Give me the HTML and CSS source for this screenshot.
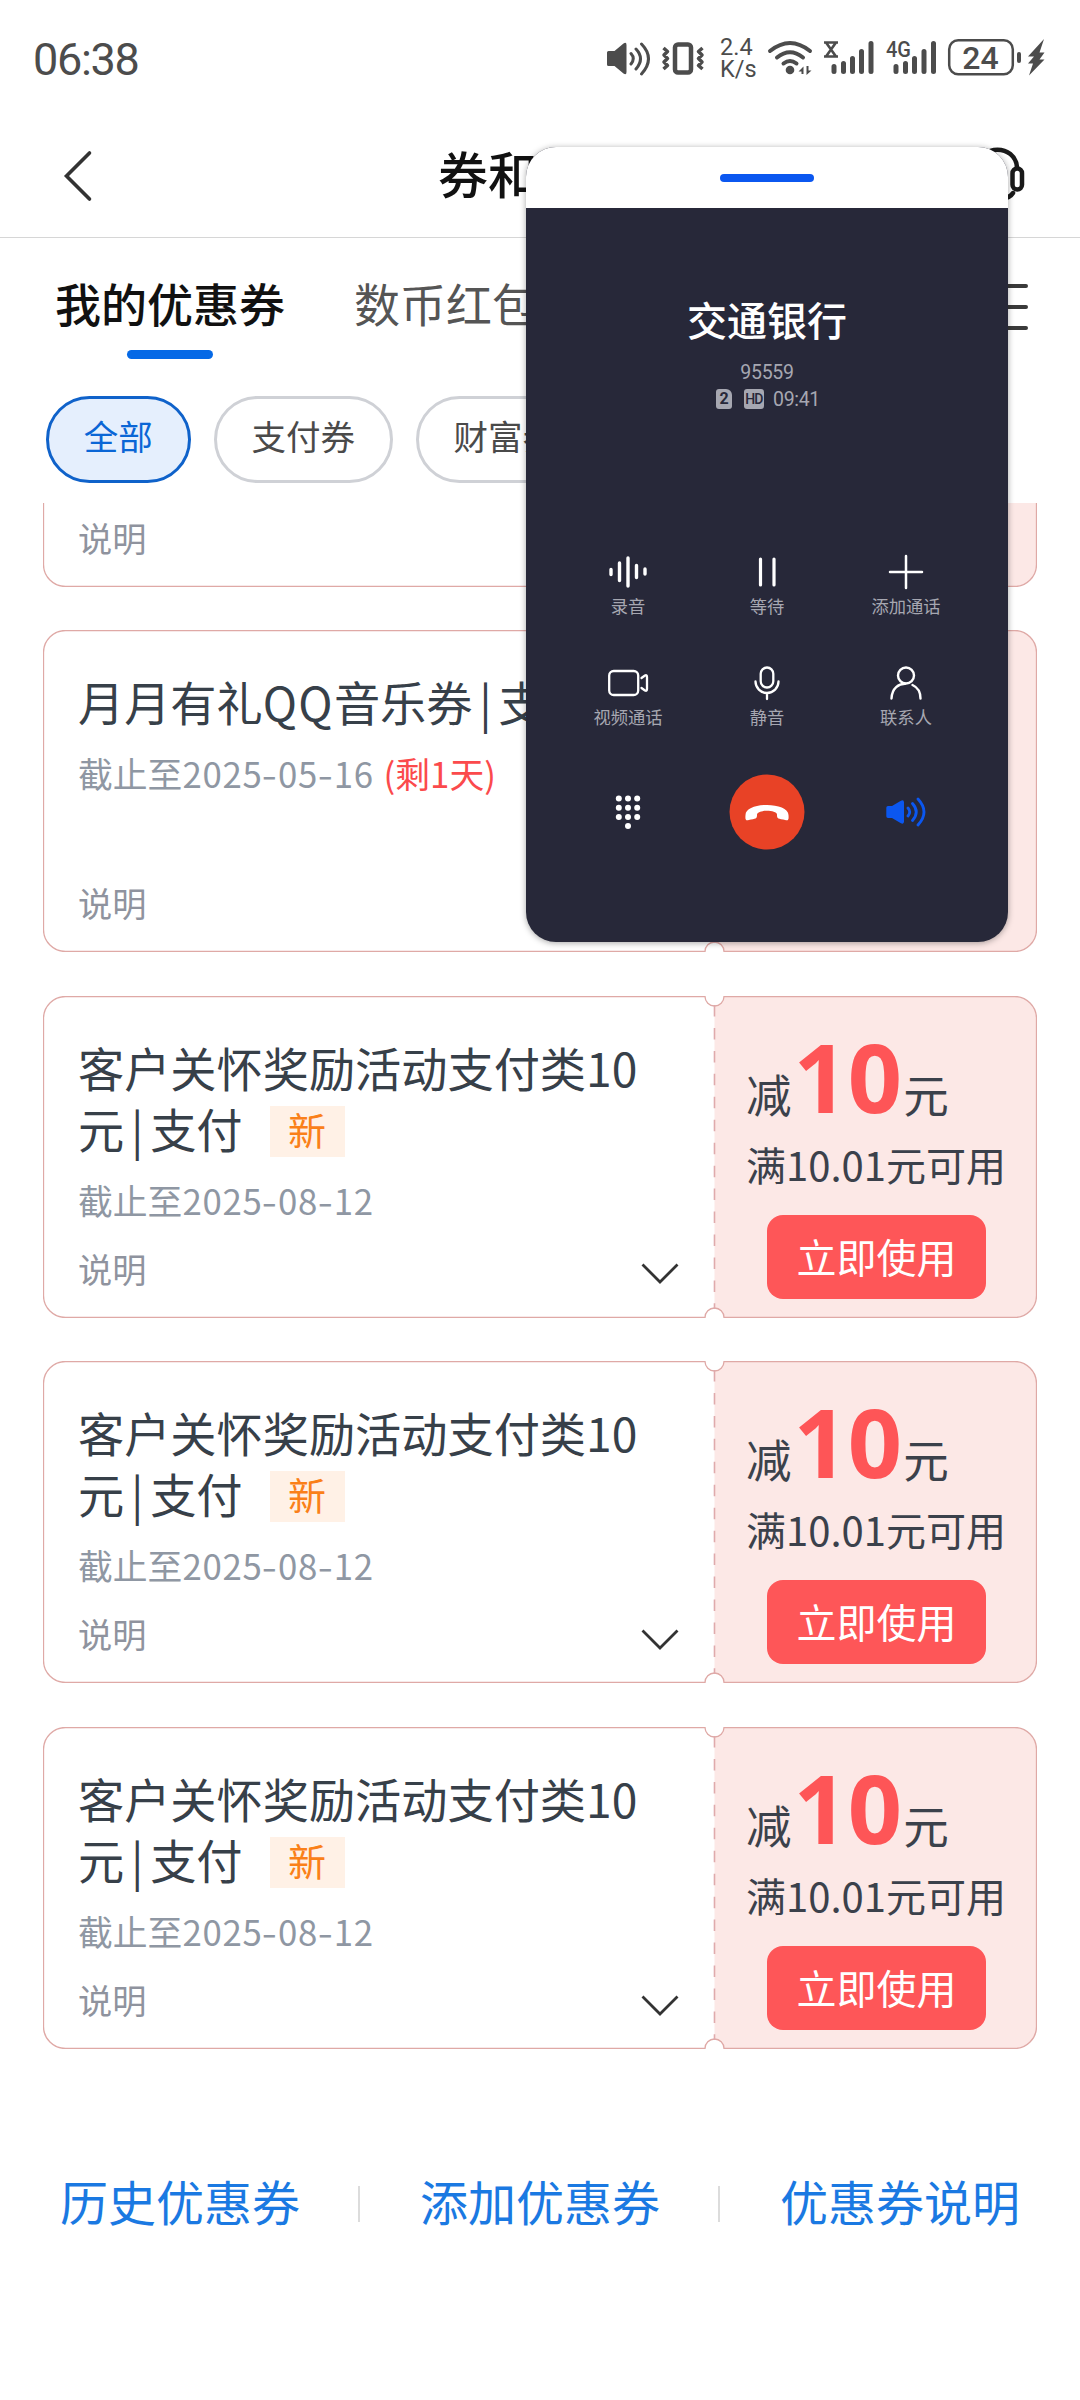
FILE: index.html
```html
<!DOCTYPE html>
<html lang="zh-CN">
<head>
<meta charset="utf-8">
<title>券和红包</title>
<link rel="stylesheet" href="styles.css">
</head>
<body>
<svg class="defs" width="0" height="0">
  <symbol id="ticket" viewBox="0 0 994 322">
    <path d="M671.5 .5H971.5A22 22 0 0 1 993.500 22.500V299.500A22 22 0 0 1 971.500 321.500H681A9.500 9.500 0 0 0 671.500 312.500V9.500A9.500 9.500 0 0 0 681 .5Z" fill="#fce8e6"/>
    <path d="M22.500 .5H662A9.500 9.500 0 0 0 681 .5H971.500A22 22 0 0 1 993.500 22.500V299.500A22 22 0 0 1 971.500 321.500H681A9.500 9.500 0 0 0 662 321.500H22.500A22 22 0 0 1 .5 299.500V22.500A22 22 0 0 1 22.500 .5Z" fill="none" stroke="#dfa9a6" stroke-width="1.300"/>
    <path d="M671.500 9V313" stroke="#dfaaac" stroke-width="1.600" stroke-dasharray="11.500 11.450"/>
  </symbol>
  <symbol id="chevron" viewBox="0 0 40 24"><path d="M2.500 2.500L20 20L37.500 2.500" fill="none" stroke="#333" stroke-width="2.800"/></symbol>
</svg>
<div class="screen">
  <header class="status">
    <span class="clock">06:38</span>
    <div class="indicators">
      <svg width="56" height="56" viewBox="600 30 56 56" fill="none" stroke="#4c4c4c" stroke-width="3" stroke-linecap="round"><path d="M608.500 51h6l9-7.500q3-2 3 1.500v27q0 3.500-3 1.500l-9-7.500h-6q-1.500 0-1.500-1.500v-12q0-1.500 1.500-1.500z" fill="#4c4c4c" stroke="none"/><path d="M631 53.500q4.500 5 0 10.500M636 49q9 9.500 0 20M641.500 44q14 14.500 0 30"/></svg>
      <svg width="56" height="56" viewBox="656 30 56 56" fill="none" stroke="#4c4c4c" stroke-width="4.500" stroke-linejoin="round"><rect x="675" y="44.500" width="16" height="28" rx="3"/><path d="M663.500 48l4 3.500-3.500 3.500 3.500 3.500-3.500 3.500 3.500 3.500-4 3.500M702.500 48l-4 3.500 3.500 3.500-3.500 3.500 3.500 3.500-3.500 3.500 4 3.500" stroke-width="3.500"/></svg>
      <span class="rate"><span>2.4</span><span>K/s</span></span>
      <svg width="56" height="56" viewBox="762 30 56 56" fill="none" stroke="#4c4c4c" stroke-width="4" stroke-linecap="round"><path d="M770 51q20-16 40 0M777 57.500q13-10.500 26 0M783.500 63.500q6.500-5 13 0"/><circle cx="790" cy="70" r="4.300" fill="#4c4c4c" stroke="none"/><path d="M798.500 71.500l5-5v7.500h-2v-2.500zM811.500 70.500l-5 4.500v-9h2v4.500z" fill="#4c4c4c" stroke="none"/></svg>
      <svg width="62" height="56" viewBox="818 30 62 56" fill="none" stroke="#4c4c4c" stroke-width="5" stroke-linecap="round"><path d="M824 42.500h14M824 56.500h14M826 42.500l10 14M836 42.500l-10 14" stroke-width="2.600" stroke-linecap="butt"/><path d="M834 66.500v5M843.500 63.500v8M852.500 58.500v13M861.500 51.500v20M871 43.500v28"/></svg>
      <svg width="62" height="56" viewBox="880 30 62 56" fill="none" stroke="#4c4c4c" stroke-width="5" stroke-linecap="round"><text x="886" y="57" class="net" textLength="25" lengthAdjust="spacingAndGlyphs">4G</text><path d="M896 66.500v5M905.500 63.500v8M914.500 68v3.500M914.500 58.500v13M924 51.500v20M933.500 43.500v28"/></svg>
      <svg width="108" height="56" viewBox="942 30 108 56"><rect x="949.200" y="40.200" width="63.600" height="34" rx="9" fill="none" stroke="#4c4c4c" stroke-width="2.500"/><text x="980.500" y="69" class="level" text-anchor="middle">24</text><rect x="1017" y="52" width="4" height="11" rx="2" fill="#4c4c4c"/><path d="M1044 39l-16 17.500h6l-6 7h5l-4 12 15.500-16h-5l5-7h-5z" fill="#4c4c4c"/></svg>
    </div>
  </header>

  <nav class="navbar">
    <svg class="back" width="32" height="56" viewBox="0 0 32 56"><path d="M27.500 5L4.500 28L27.500 51" fill="none" stroke="#333" stroke-width="3.600" stroke-linecap="round"/></svg>
    <h1 class="title">券和红包</h1>
    <svg class="service" width="56" height="56" viewBox="970 146 56 56" fill="none" stroke="#1a1a1a" stroke-width="4.500" stroke-linecap="round"><path d="M978 166C980 143 1015 143 1017 166M1013 192q-3 5-12 6"/><rect x="1012.500" y="167.500" width="9.500" height="21" rx="4.750"/><rect x="973" y="167.500" width="9.500" height="21" rx="4.750"/></svg>
  </nav>

  <div class="tabs">
    <span class="tab active">我的优惠券</span>
    <span class="tab">数币红包</span>
    <svg class="menu" width="44" height="50" viewBox="0 0 44 50"><path d="M4 4H40M4 25H40M4 46H40" stroke="#3a3a3a" stroke-width="4" stroke-linecap="round"/></svg>
  </div>

  <div class="chips">
    <span class="chip active">全部</span>
    <span class="chip">支付券</span>
    <span class="chip">财富券</span>
  </div>

  <main class="list">
    <article class="coupon">
      <svg class="shape"><use href="#ticket"/></svg>
      <section class="info"><div class="foot"><span>说明</span></div></section>
    </article>
    <article class="coupon">
      <svg class="shape"><use href="#ticket"/></svg>
      <section class="info">
        <h2>月月有礼<span class="latin">QQ</span>音乐券<span class="bar">|</span>支付</h2>
        <p class="date">截止至<span class="num">2025<i>-</i>05<i>-</i>16</span> <em>(剩1天)</em></p>
        <div class="foot"><span>说明</span></div>
      </section>
    </article>
    <article class="coupon">
      <svg class="shape"><use href="#ticket"/></svg>
      <section class="info">
        <h2>客户关怀奖励活动支付类10<br>元<span class="bar">|</span>支付<span class="badge">新</span></h2>
        <p class="date">截止至<span class="num">2025<i>-</i>08<i>-</i>12</span></p>
        <div class="foot"><span>说明</span><svg class="chev"><use href="#chevron"/></svg></div>
      </section>
      <section class="offer">
        <p class="amount">减<b>10</b>元</p>
        <p class="rule">满10.01元可用</p>
        <span class="use">立即使用</span>
      </section>
    </article>
    <article class="coupon">
      <svg class="shape"><use href="#ticket"/></svg>
      <section class="info">
        <h2>客户关怀奖励活动支付类10<br>元<span class="bar">|</span>支付<span class="badge">新</span></h2>
        <p class="date">截止至<span class="num">2025<i>-</i>08<i>-</i>12</span></p>
        <div class="foot"><span>说明</span><svg class="chev"><use href="#chevron"/></svg></div>
      </section>
      <section class="offer">
        <p class="amount">减<b>10</b>元</p>
        <p class="rule">满10.01元可用</p>
        <span class="use">立即使用</span>
      </section>
    </article>
    <article class="coupon">
      <svg class="shape"><use href="#ticket"/></svg>
      <section class="info">
        <h2>客户关怀奖励活动支付类10<br>元<span class="bar">|</span>支付<span class="badge">新</span></h2>
        <p class="date">截止至<span class="num">2025<i>-</i>08<i>-</i>12</span></p>
        <div class="foot"><span>说明</span><svg class="chev"><use href="#chevron"/></svg></div>
      </section>
      <section class="offer">
        <p class="amount">减<b>10</b>元</p>
        <p class="rule">满10.01元可用</p>
        <span class="use">立即使用</span>
      </section>
    </article>
  </main>

  <footer class="links">
    <a>历史优惠券</a>
    <a>添加优惠券</a>
    <a>优惠券说明</a>
  </footer>

  <aside class="call">
    <div class="grip"><i></i></div>
    <h3>交通银行</h3>
    <p class="number">95559</p>
    <div class="meta">
      <span class="sim">2</span><span class="hd">HD</span><span class="timer">09:41</span>
    </div>
    <div class="keys">
      <div class="key">
        <svg width="44" height="40" viewBox="-22 -20 44 40"><path d="M-17-2.500v5M-8.500-9v17.500M0-14v28M8.500-6.500v12M17-3v5" stroke="#fff" stroke-width="3.400" stroke-linecap="round" fill="none"/></svg>
        <span>录音</span>
      </div>
      <div class="key">
        <svg width="44" height="40" viewBox="-22 -20 44 40"><path d="M-6.500-13v26M7-13v26" stroke="#fff" stroke-width="3.200" stroke-linecap="round" fill="none"/></svg>
        <span>等待</span>
      </div>
      <div class="key">
        <svg width="44" height="40" viewBox="-22 -20 44 40"><path d="M-16 0h32M0-16v32" stroke="#fff" stroke-width="2.500" stroke-linecap="round" fill="none"/></svg>
        <span>添加通话</span>
      </div>
      <div class="key">
        <svg width="44" height="40" viewBox="-22 -20 44 40"><g stroke="#fff" stroke-width="2.300" stroke-linecap="round" stroke-linejoin="round" fill="none"><rect x="-18.800" y="-12" width="29" height="24" rx="4.500"/><path d="M13.500-5l3.500-2.500q2-1 2 1.500v12q0 2.500-2 1.500l-3.500-2.500"/></g></svg>
        <span>视频通话</span>
      </div>
      <div class="key">
        <svg width="44" height="40" viewBox="-22 -20 44 40"><g stroke="#fff" stroke-width="2.300" stroke-linecap="round" fill="none"><rect x="-6.300" y="-15.500" width="12.600" height="20" rx="6.300"/><path d="M-11.500-1.500a11.500 11.500 0 0 0 23 0M0 10v6"/></g></svg>
        <span>静音</span>
      </div>
      <div class="key">
        <svg width="44" height="40" viewBox="-22 -20 44 40"><g stroke="#fff" stroke-width="2.400" stroke-linecap="round" fill="none"><circle cx="0" cy="-7.500" r="8"/><path d="M-14.500 15.500C-14 5-7 .8-1 .8M6.500 2C12 4.500 14.500 10 14.500 15.500"/></g></svg>
        <span>联系人</span>
      </div>
    </div>
    <div class="actions">
      <svg width="44" height="44" viewBox="-22 -22 44 44" fill="#fff"><circle cx="-9.200" cy="-13.500" r="3"/><circle cx="0" cy="-13.500" r="3"/><circle cx="9.200" cy="-13.500" r="3"/><circle cx="-9.200" cy="-4.300" r="3"/><circle cx="0" cy="-4.300" r="3"/><circle cx="9.200" cy="-4.300" r="3"/><circle cx="-9.200" cy="4.900" r="3"/><circle cx="0" cy="4.900" r="3"/><circle cx="9.200" cy="4.900" r="3"/><circle cx="0" cy="14" r="3"/></svg>
      <svg width="76" height="76" viewBox="-38 -38 76 76"><circle r="37.500" fill="#e84226"/><path d="M-21.500 3C-21.500-10.500 21.500-10.500 21.500 3C22 9 21 9 16 7.500C10 6.500 10 6 10 2.500C9.500-2.500-9.500-2.500-10 2.500C-10 6-10 6.500-16 7.500C-21 9-22 9-21.500 3Z" fill="#fff"/></svg>
      <svg width="44" height="44" viewBox="-22 -22 44 44" fill="none" stroke="#0b57f0" stroke-width="2.800" stroke-linecap="round"><path d="M-18-6h4l8.500-5q3.500-1.800 3.500 1.500V9.500q0 3.300-3.500 1.500L-14 6h-4q-1.700 0-1.700-1.700v-8.600q0-1.700 1.700-1.700z" fill="#0b57f0" stroke="none"/><path d="M2-4q3.500 4 0 8M6.500-8.500q7.500 8.500 0 17M12-13q12 13 0 26"/></svg>
    </div>
  </aside>
</div>
</body>
</html>
```
FILE: styles.css
```css
* { box-sizing: border-box; margin: 0; padding: 0; }
body { background: #fff; font-family: "Noto Sans CJK SC", sans-serif; font-weight: 400; }
svg { display: block; flex: none; }
.defs { position: absolute; }
.screen { position: relative; width: 1080px; height: 2400px; overflow: hidden; background: #fff; }

.status { height: 112px; display: flex; justify-content: space-between; padding: 30px 30px 0 33px; color: #4c4c4c; font-family: Roboto, sans-serif; }
.clock { font-size: 45px; line-height: 60px; font-weight: 400; letter-spacing: -1.300px; }
.indicators { display: flex; }
.rate { width: 50px; display: flex; flex-direction: column; padding: 7px 0 0 8px; font-size: 23.500px; line-height: 21.500px; }
.net { font: 500 22px Roboto, sans-serif; fill: #4c4c4c; stroke: none; }
.level { font: 500 32px Roboto, sans-serif; fill: #4c4c4c; }

.navbar { height: 126px; display: flex; align-items: center; justify-content: space-between; padding: 0 54px 0 62px; border-bottom: 1px solid #d6d6d6; }
.back { margin-top: 2px; }
.title { font-size: 50px; line-height: 70px; font-weight: 500; color: #111; margin: -5px 0 0 12px; }

.tabs { height: 121px; display: flex; padding: 32px 50px 0 55px; gap: 69px; font-size: 46px; line-height: 64px; color: #555; }
.tab.active { display: flex; flex-direction: column; align-items: center; color: #111; font-weight: 500; }
.tab.active::after { content: ""; width: 86px; height: 9px; border-radius: 4.500px; background: #0569e6; margin-top: 16px; }
.menu { margin: 12px 0 0 auto; }

.chips { display: flex; gap: 23px; padding: 37px 0 20px 46px; }
.chip { height: 87px; border: 3px solid #cfd1d6; border-radius: 43.500px; padding: 0 34.800px; font-size: 34.500px; line-height: 72px; color: #4a4a4a; }
.chip.active { border-color: #0f62ca; background: #e5effd; color: #0a66d6; }

.list { height: 1546px; overflow: hidden; padding: 0 43px; display: flex; flex-direction: column; justify-content: flex-end; gap: 43.600px; }
.coupon { position: relative; flex: none; height: 322px; display: flex; }
.shape { position: absolute; inset: 0; width: 994px; height: 322px; }
.info { position: relative; width: 671px; display: flex; flex-direction: column; padding: 40px 34px 20px 35px; white-space: nowrap; }
.info h2 { font-size: 46.200px; line-height: 61px; font-weight: 400; color: #374049; }
.latin { letter-spacing: 1.300px; }
.bar { display: inline-block; width: 26px; text-align: center; }
.badge { display: inline-block; width: 75px; height: 51px; margin-left: 27px; text-align: center; font-size: 38px; line-height: 46px; vertical-align: top; margin-top: 9px; background: #fff1e6; color: #fa8019; }
.date { font-size: 34.800px; line-height: 48px; margin-top: 18px; color: #8f97a3; }
.num { letter-spacing: .7px; }
.num i { display: inline-block; width: 15.600px; font-style: normal; text-align: center; transform: scaleX(1.250); }
.date em { font-style: normal; color: #fb4a4c; margin-left: 2px; }
.foot { margin-top: auto; display: flex; justify-content: space-between; align-items: center; font-size: 34.200px; line-height: 60px; color: #8f939e; }
.chev { width: 40px; height: 24px; margin-top: 13px; }
.offer { position: relative; width: 322px; padding: 30px 0 0 32px; color: #3b414b; white-space: nowrap; }
.amount { font-size: 45.500px; height: 108px; line-height: 108px; }
.amount b { font-family: "Noto Sans", sans-serif; font-size: 95px; line-height: 100px; font-weight: 700; color: #fe5557; padding: 0 1px 0 2px; }
.rule { font-size: 40px; line-height: 60px; }
.use { display: block; width: 219px; height: 84px; margin: 21px 0 0 21px; border-radius: 16px; background: #fe5658; color: #fff; font-size: 40px; line-height: 82px; text-align: center; }

.links { display: grid; grid-template-columns: repeat(3, 1fr); margin-top: 119px; font-size: 48px; line-height: 64px; color: #1a79e2; text-align: center; }
.links a { display: flex; align-items: center; justify-content: center; position: relative; }
.links a + a::before { content: ""; position: absolute; left: -2px; top: 18px; width: 2px; height: 36px; background: #dcdcdc; }

.call { position: absolute; left: 526px; top: 147px; width: 482px; height: 795px; border-radius: 30px; overflow: hidden; background: #272839; box-shadow: 0 1px 6px rgba(0,0,0,.35); color: #a6a7b1; text-align: center; font-family: Roboto, "Noto Sans CJK SC", sans-serif; }
.grip { height: 61px; background: #fff; display: flex; justify-content: center; padding-top: 27px; }
.grip i { width: 94px; height: 8px; border-radius: 4px; background: #0b57f0; }
.call h3 { font-size: 40px; line-height: 60px; margin-top: 85px; color: #fff; font-weight: 500; }
.number { font-size: 19.500px; line-height: 26px; margin-top: 7px; letter-spacing: -.3px; }
.meta { display: flex; justify-content: center; align-items: center; height: 26px; font-size: 19.500px; padding-left: 2px; }
.sim, .hd { background: #a6a7b1; color: #272839; font-size: 16px; line-height: 20px; font-weight: 700; height: 20px; border-radius: 3px; }
.sim { width: 16px; border-top-right-radius: 6px; margin-right: 12px; }
.hd { width: 20px; font-size: 14px; letter-spacing: -.8px; margin-right: 9px; font-weight: 500; }
.timer { letter-spacing: -.3px; }
.keys { display: grid; grid-template-columns: repeat(3, 139px); justify-content: center; row-gap: 43px; margin-top: 140px; }
.key { display: flex; flex-direction: column; align-items: center; font-size: 17.300px; line-height: 26px; height: 68px; }
.key span { margin-top: 2px; }
.actions { display: grid; grid-template-columns: repeat(3, 139px); justify-content: center; justify-items: center; align-items: center; margin-top: 43px; }
```
